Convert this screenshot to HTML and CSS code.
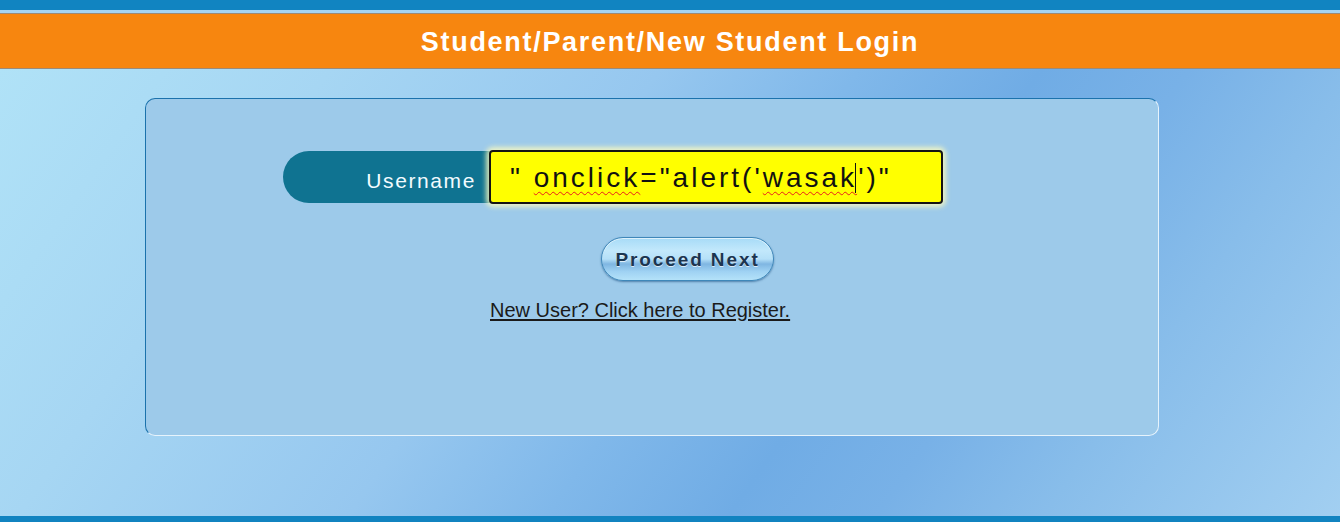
FILE: index.html
```html
<!DOCTYPE html>
<html>
<head>
<meta charset="utf-8">
<link rel="stylesheet" href="styles.css">
</head>
<body>
<div class="topbar"></div>
<div class="stripe"></div>
<header class="header"><h1 class="title">Student/Parent/New Student Login</h1></header>
<main class="main">
  <section class="panel">
    <div class="row">
      <div class="label">Username</div>
      <div class="field"><span class="txt">" <span class="sp">onclick</span>="alert('<span class="sp">wasak</span><span class="caret"></span>')"</span></div>
    </div>
    <button class="btn" type="button">Proceed Next</button>
    <a class="link" href="#">New User? Click here to Register.</a>
  </section>
</main>
<div class="footbar"></div>
</body>
</html>
```
FILE: styles.css
```css
* { box-sizing: border-box; }
html, body { margin: 0; padding: 0; }
body {
  width: 1340px;
  height: 522px;
  overflow: hidden;
  font-family: "Liberation Sans", Arial, sans-serif;
  background: #8fc0ec;
}
.topbar { height: 10px; background: #1184c1; }
.stripe { height: 4px; background: linear-gradient(#a6d4f1 0 3px, #9c8a78 3px); }
.header {
  height: 55px;
  background: #f7860f;
  border-bottom: 1px solid #9c8a78;
  display: flex;
  align-items: center;
  justify-content: center;
}
.title {
  margin: 0;
  color: #fff;
  font-size: 27px;
  font-weight: bold;
  letter-spacing: 1.7px;
  padding-top: 2px;
}
.main {
  height: 447px;
  padding: 29px 0 0 145px;
  background: linear-gradient(125deg, #b0e2f7 0%, #a6d6f3 20%, #96c7ef 40%, #80b8ea 52%, #70ace5 63%, #78b1e7 72%, #88bdea 82%, #a2cff1 100%);
}
.panel {
  width: 1014px;
  height: 338px;
  border-radius: 10px;
  background: #9dcaea;
  border: 1px solid;
  border-color: #1b72ac #e6f3fc #e6f3fc #1b72ac;
  display: flex;
  flex-direction: column;
  align-items: flex-start;
  padding: 51px 0 0 137px;
}
.row { display: flex; align-items: center; height: 54px; }
.label {
  width: 208px;
  height: 52px;
  background: #0f7391;
  border-radius: 26px 0 0 26px;
  color: #f2fbff;
  font-size: 21px;
  letter-spacing: 1.6px;
  display: flex;
  align-items: center;
  justify-content: flex-end;
  padding: 7px 15px 0 0;
}
.field {
  width: 454px;
  height: 54px;
  margin-left: -2px;
  background: #ffff00;
  border: 2px solid #141414;
  border-radius: 4px;
  box-shadow: 0 0 5px 3px rgba(250, 250, 190, 0.85);
  display: flex;
  align-items: center;
  padding: 2px 0 0 19px;
  color: #111;
  font-size: 28px;
  letter-spacing: 3px;
  white-space: pre;
}
.sp { text-decoration: underline wavy #e81c1c; text-decoration-thickness: 1.3px; text-underline-offset: 4px; }
.caret {
  display: inline-block;
  width: 1px;
  height: 30px;
  background: #111;
  vertical-align: -6px;
  margin-left: -2px;
  margin-right: 2px;
}
.btn {
  margin: 33px 0 0 318px;
  width: 173px;
  height: 44px;
  border-radius: 22px;
  border: 1px solid #3f87b9;
  background: linear-gradient(#a7dbf7 0%, #c2e8fb 30%, #b5e0f8 50%, #7fb6e2 62%, #9fd2f3 80%, #b4e2f9 100%);
  box-shadow: 0 1px 2px rgba(30, 80, 130, 0.6), inset 0 1px 0 rgba(255,255,255,0.6);
  color: #1c3550;
  font-family: "Liberation Sans", Arial, sans-serif;
  font-weight: bold;
  font-size: 19px;
  letter-spacing: 1.9px;
  text-shadow: 0 1px 0 rgba(255,255,255,0.7);
  padding: 2px 0 0;
  cursor: pointer;
}
.link {
  margin: 18px 0 0 207px;
  color: #1a1a1a;
  font-size: 20px;
  text-decoration: underline;
  text-underline-offset: 2px;
}
.footbar { height: 6px; background: #1183c0; }
```
